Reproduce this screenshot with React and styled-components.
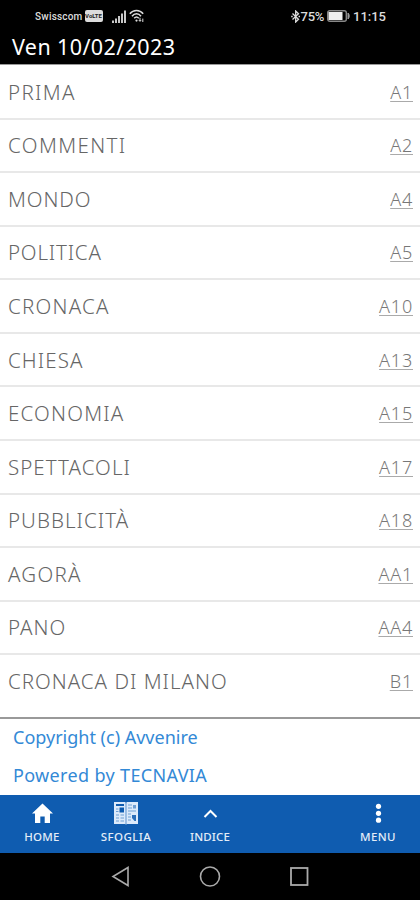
import React from 'react';
import styled, { createGlobalStyle } from 'styled-components';

const GlobalStyle = createGlobalStyle`
  * {
    box-sizing: border-box;
  }

  body {
    margin: 0;
    background: #fff;
    font-family: 'Noto Sans', 'Open Sans', sans-serif;
  }
`;

const Screen = styled.div`
  width: 420px;
  height: 900px;
  display: flex;
  flex-direction: column;
  overflow: hidden;
  background: #fff;
`;

const StatusBar = styled.div`
  height: 32px;
  padding: 0 34px 0 35px;
  display: flex;
  align-items: center;
  justify-content: space-between;
  background: #000;
  color: #dcdcdc;
  font-family: Roboto, sans-serif;
`;

const StatusGroup = styled.div`
  height: 20px;
  display: flex;
  align-items: center;
  gap: ${({ $gap }) => $gap}px;
`;

const Carrier = styled.span`
  font-size: 10px;
  font-weight: 500;
  letter-spacing: 0.2px;
`;

const VolteBadge = styled.span`
  width: 18px;
  height: 12px;
  margin-right: 7px;
  border-radius: 2px;
  background: #dcdcdc;
  color: #222;
  font-size: 6px;
  font-weight: 700;
  line-height: 12px;
  text-align: center;
`;

const StatusText = styled.span`
  font-size: 13px;
  font-weight: 500;
  letter-spacing: ${({ $spacing }) => $spacing}px;
`;

const DateBar = styled.div`
  height: 32px;
  padding-left: 12px;
  background: #000;
  color: #fff;
  font-size: 21.5px;
  line-height: 30px;
  letter-spacing: 0.4px;
`;

const SectionList = styled.ul`
  height: 655px;
  margin: 0;
  padding: 1px 0 0;
  list-style: none;
  border-top: 1px solid #999;
  border-bottom: 2px solid #999;
`;

const SectionRow = styled.li`
  height: 53.57px;
  padding: 0 7px 0 8px;
  display: flex;
  align-items: center;
  justify-content: space-between;
  border-bottom: 2px solid #e8e8e8;
  color: #666;

  &:last-child {
    border-bottom-color: transparent;
  }
`;

const SectionName = styled.span`
  font-size: 20.5px;
  font-weight: 300;
  letter-spacing: ${({ $spacing }) => $spacing}px;
`;

const PageLink = styled.a`
  color: #777;
  font-size: 18px;
  font-weight: 300;
  letter-spacing: 0.8px;
  text-decoration: underline;
  text-decoration-color: #aaa;
  text-decoration-thickness: 1px;
  text-underline-offset: 2px;
`;

const Footer = styled.footer`
  height: 76px;
  padding-left: 13px;
  color: #3389d6;
  font-size: 18px;
`;

const FooterLine = styled.div`
  height: 38px;
  line-height: 37px;
  letter-spacing: ${({ $spacing }) => $spacing}px;
`;

const TabBar = styled.nav`
  height: 58px;
  display: grid;
  grid-template-columns: repeat(5, 84px);
  background: #0f5cb0;
  color: #fff;
`;

const Tab = styled.div`
  grid-column: ${({ $column }) => $column};
  padding-top: 6px;
  display: flex;
  flex-direction: column;
  align-items: center;
`;

const TabLabel = styled.span`
  margin-top: 4px;
  color: #e4edf8;
  font-size: 11.5px;
  font-weight: 500;
  line-height: 16px;
  letter-spacing: ${({ $spacing }) => $spacing}px;
`;

const SystemBar = styled.div`
  height: 47px;
  display: flex;
  align-items: center;
  justify-content: center;
  gap: 67px;
  background: #000;
`;

const sections = [
  { name: 'PRIMA', page: 'A1', spacing: 1.35 },
  { name: 'COMMENTI', page: 'A2', spacing: 1.4 },
  { name: 'MONDO', page: 'A4', spacing: 0.9 },
  { name: 'POLITICA', page: 'A5', spacing: 0.8 },
  { name: 'CRONACA', page: 'A10', spacing: 1.25 },
  { name: 'CHIESA', page: 'A13', spacing: 1.1 },
  { name: 'ECONOMIA', page: 'A15', spacing: 1.2 },
  { name: 'SPETTACOLI', page: 'A17', spacing: 1.05 },
  { name: 'PUBBLICITÀ', page: 'A18', spacing: 1.05 },
  { name: 'AGORÀ', page: 'AA1', spacing: 1.25 },
  { name: 'PANO', page: 'AA4', spacing: 1 },
  { name: 'CRONACA DI MILANO', page: 'B1', spacing: 1 },
];

const SignalIcon = () => (
  <svg width="15" height="13" viewBox="0 0 15 13" fill="#c8c8c8">
    <rect x="0" y="10.5" width="2" height="2.5" />
    <rect x="3" y="8.5" width="2" height="4.5" />
    <rect x="6" y="6" width="2" height="7" />
    <rect x="9" y="3.5" width="2" height="9.5" />
    <rect x="12" y="0.5" width="2" height="12.5" />
  </svg>
);

const WifiIcon = () => (
  <svg width="16" height="14" viewBox="0 0 16 14" fill="none" stroke="#dcdcdc" strokeWidth="1.5">
    <path d="M0.8 4.8C4.3 0.5 10.7 0.5 14.2 4.8" />
    <path d="M3 7.2C5.5 4 9.5 4 12 7.2" />
    <path d="M5.2 9.3C6.7 7.5 8.3 7.5 9.8 9.3" />
    <circle cx="7.5" cy="11.6" r="1.1" fill="#dcdcdc" stroke="none" />
    <path d="M11 8.8v3.2M9.8 11l1.2 1.4 1.2-1.4M13.8 13v-3.4" strokeWidth="1" />
  </svg>
);

const BluetoothIcon = () => (
  <svg width="10" height="13" viewBox="0 0 10 13" fill="none" stroke="#dcdcdc" strokeWidth="1.3">
    <path d="M1.5 3.5l6 5.7-2.8 2.8V1l2.8 2.7-6 5.8" />
    <path d="M0.2 6.5h1.5M7.5 6.5H9" />
  </svg>
);

const BatteryIcon = () => (
  <svg width="23" height="12" viewBox="0 0 23 12">
    <rect x="0.7" y="0.7" width="18.6" height="10.6" rx="2" fill="none" stroke="#888" strokeWidth="1.4" />
    <rect x="1.5" y="2" width="14" height="8" fill="#efefef" />
    <path d="M21 3c1.6 1 1.6 5 0 6z" fill="#999" stroke="#999" />
  </svg>
);

const HomeIcon = () => (
  <svg width="24" height="24" viewBox="0 0 24 24" fill="#fff">
    <path d="M12.5 2.5L2 12.5h3V22h5.3v-6.5h4.4V22H20v-9.5h3z" />
  </svg>
);

const NewspaperIcon = () => (
  <svg width="26" height="24" viewBox="0 0 26 24">
    <path d="M1 1h11l1 1 1-1h11v22H14l-1 .5-1-.5H1z" fill="#dceafb" />
    <rect x="3" y="3" width="8" height="2" fill="#0f5cb0" />
    <rect x="6.5" y="6.5" width="4.5" height="5" fill="#0f5cb0" />
    <path
      d="M3 8h2.5M3 10.5h2.5M3 14h3M3 17h3M3 20h3M7.5 14H11M7.5 17H11M7.5 20H11M15 4h4M15 7h4M15 10h8M15 13h3M15 16h3M15 19h3"
      stroke="#6f9fd4"
      strokeWidth="1.2"
    />
    <rect x="20" y="4" width="3" height="3.5" fill="#6f9fd4" />
    <path d="M19 14h4v6h-1.5l-2.5-3z" fill="#2c6fb9" />
    <path d="M13 2v21" stroke="#5f93cd" strokeWidth="1" />
  </svg>
);

const ChevronIcon = () => (
  <svg width="24" height="24" viewBox="0 0 24 24" fill="none" stroke="#fff" strokeWidth="2">
    <path d="M6.5 16l6-6 6 6" />
  </svg>
);

const DotsIcon = () => (
  <svg width="24" height="24" viewBox="0 0 24 24" fill="#fff">
    <circle cx="12.5" cy="5.3" r="2.6" />
    <circle cx="12.5" cy="12.3" r="2.6" />
    <circle cx="12.5" cy="19.2" r="2.6" />
  </svg>
);

const tabs = [
  { label: 'HOME', column: 1, spacing: 0.2, Icon: HomeIcon },
  { label: 'SFOGLIA', column: 2, spacing: 0.4, Icon: NewspaperIcon },
  { label: 'INDICE', column: 3, spacing: 0.1, Icon: ChevronIcon },
  { label: 'MENU', column: 5, spacing: 0.4, Icon: DotsIcon },
];

const App = () => {
  return (
    <>
      <GlobalStyle />
      <Screen>
        <StatusBar>
          <StatusGroup $gap={2}>
            <Carrier>Swisscom</Carrier>
            <VolteBadge>VoLTE</VolteBadge>
            <SignalIcon />
            <WifiIcon />
          </StatusGroup>
          <StatusGroup $gap={3}>
            <StatusGroup $gap={0}>
              <BluetoothIcon />
              <StatusText $spacing={-0.3}>75%</StatusText>
            </StatusGroup>
            <BatteryIcon />
            <StatusText $spacing={0}>11:15</StatusText>
          </StatusGroup>
        </StatusBar>
        <DateBar>Ven 10/02/2023</DateBar>
        <SectionList>
          {sections.map(({ name, page, spacing }) => (
            <SectionRow key={name}>
              <SectionName $spacing={spacing}>{name}</SectionName>
              <PageLink>{page}</PageLink>
            </SectionRow>
          ))}
        </SectionList>
        <Footer>
          <FooterLine $spacing={0}>Copyright (c) Avvenire</FooterLine>
          <FooterLine $spacing={0.35}>Powered by TECNAVIA</FooterLine>
        </Footer>
        <TabBar>
          {tabs.map(({ label, column, spacing, Icon }) => (
            <Tab key={label} $column={column}>
              <Icon />
              <TabLabel $spacing={spacing}>{label}</TabLabel>
            </Tab>
          ))}
        </TabBar>
        <SystemBar>
          <svg width="22" height="22" viewBox="0 0 22 22" fill="none" stroke="#aaa" strokeWidth="1.6">
            <path d="M18 1.5v18L3 10.5z" />
          </svg>
          <svg width="22" height="22" viewBox="0 0 22 22" fill="none" stroke="#aaa" strokeWidth="1.6">
            <circle cx="11" cy="10.5" r="9.5" />
          </svg>
          <svg width="22" height="22" viewBox="0 0 22 22" fill="none" stroke="#aaa" strokeWidth="1.8">
            <rect x="3" y="2" width="16.5" height="17" />
          </svg>
        </SystemBar>
      </Screen>
    </>
  );
};

export default App;
